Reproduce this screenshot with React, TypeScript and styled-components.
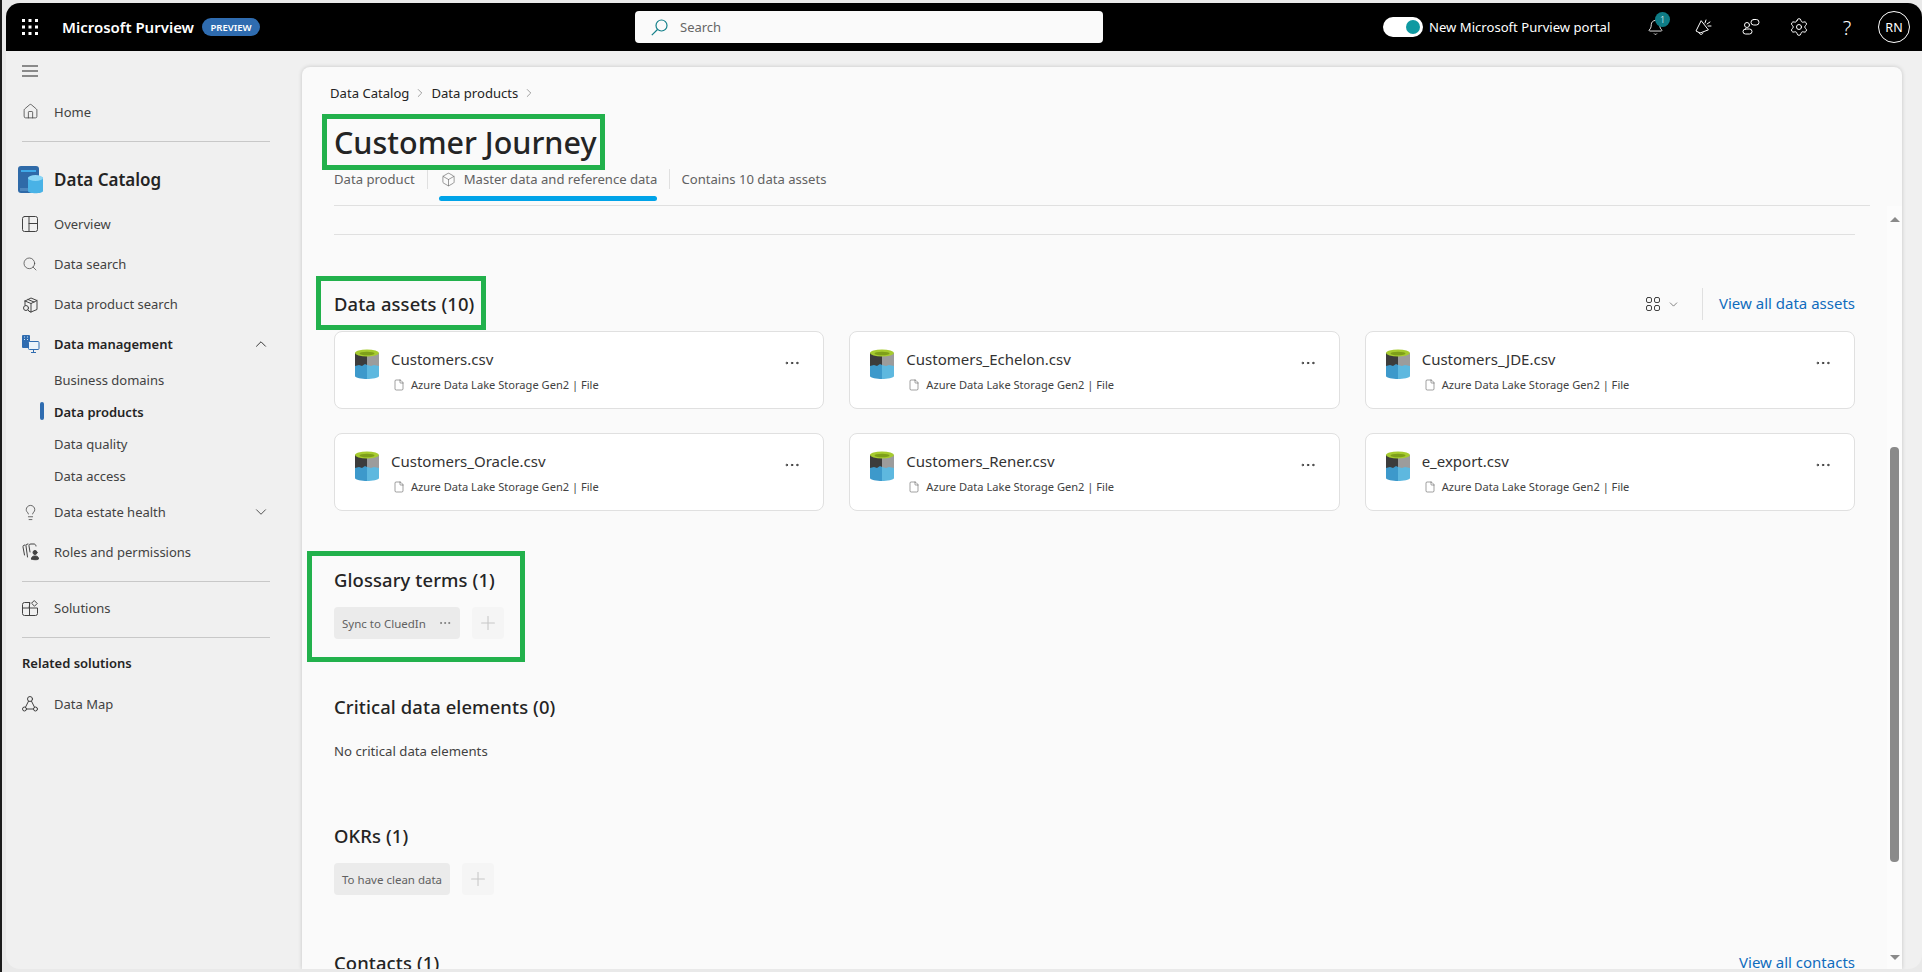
import React from "react"
import styled, { createGlobalStyle } from "styled-components"
import { Home, Search, Lightbulb, Bell, Settings, ChevronUp, ChevronDown, ChevronRight, MoreHorizontal, File, Plus, Box } from "lucide-react"

const GlobalStyle = createGlobalStyle`
html, body {
  margin: 0;
  padding: 0;
  background: #e9e9e9;
  overflow: hidden;
}
* { box-sizing: border-box; }
`

const Screen = styled.div`
width: 1922px;
height: 972px;
padding: 3px 0 3px 4px;
border-left: 2px solid #1c1c1c;
background: #e9e9e9;
font-family: "Noto Sans", "Open Sans", Arial, sans-serif;
color: #242424;
`

const AppWindow = styled.div`
height: 966px;
display: flex;
flex-direction: column;
background: #f0f0f0;
border-radius: 14px;
overflow: hidden;
`

const TopBar = styled.header`
height: 48px;
flex: none;
display: flex;
align-items: center;
background: #000;
color: #fff;
`

const BrandArea = styled.div`
width: 629px;
display: flex;
align-items: center;
padding-left: 16px;
`

const BrandName = styled.span`
margin-left: 24px;
font-size: 15px;
font-weight: 600;
`

const PreviewBadge = styled.span`
margin-left: 8px;
height: 18px;
width: 58px;
display: flex;
align-items: center;
justify-content: center;
border-radius: 9px;
background: #2f6cb0;
font-size: 9.5px;
font-weight: 600;
`

const SearchBox = styled.div`
width: 468px;
height: 32px;
display: flex;
align-items: center;
gap: 12px;
padding-left: 16px;
background: #fafafa;
border-radius: 4px;
font-size: 13px;
color: #666;
`

const TopRight = styled.div`
flex: 1;
display: flex;
align-items: center;
padding-left: 280px;
`

const Toggle = styled.span`
width: 40px;
height: 20px;
flex: none;
display: flex;
align-items: center;
justify-content: flex-end;
padding-right: 3px;
border-radius: 10px;
background: #fff;
`

const ToggleKnob = styled.span`
width: 14px;
height: 14px;
border-radius: 50%;
background: #0f99a1;
`

const PortalLabel = styled.span`
margin-left: 6px;
width: 202px;
font-size: 13.1px;
white-space: nowrap;
`

const TopIcon = styled.span`
position: relative;
width: 48px;
height: 48px;
flex: none;
display: flex;
align-items: center;
justify-content: center;
font-size: 20px;
font-weight: 300;
`

const CountBadge = styled.span`
position: absolute;
top: 9px;
left: 24px;
width: 15px;
height: 15px;
display: flex;
align-items: center;
justify-content: center;
border-radius: 50%;
background: #0e7c86;
font-size: 9px;
`

const Avatar = styled.span`
width: 32px;
height: 32px;
margin-left: 7px;
flex: none;
display: flex;
align-items: center;
justify-content: center;
border: 1px solid #fff;
border-radius: 50%;
font-size: 12.5px;
`

const Columns = styled.div`
flex: 1;
min-height: 0;
display: flex;
`

const Sidebar = styled.nav`
width: 296px;
flex: none;
padding-left: 16px;
`

const NavRow = styled.div<{ $h?: number; $strong?: boolean; $big?: boolean }>`
position: relative;
height: ${p => p.$h || 40}px;
width: 248px;
display: flex;
align-items: center;
padding-bottom: ${p => (p.$big ? 2 : 0)}px;
font-size: ${p => (p.$big ? 17 : 13)}px;
font-weight: ${p => (p.$big || p.$strong ? 600 : 400)};
color: ${p => (p.$big || p.$strong ? "#242424" : "#424242")};
`

const NavIcon = styled.span<{ $shift?: number }>`
width: ${p => 32 + (p.$shift || 0)}px;
flex: none;
display: flex;
align-items: center;
margin-left: ${p => -(p.$shift || 0)}px;
color: #424242;
`

const NavLabel = styled.span`
flex: 1;
`

const SubRow = styled(NavRow)`
height: 32px;
padding-left: 32px;
`

const ActiveMark = styled.span`
position: absolute;
left: 18px;
top: 6px;
width: 4px;
height: 18px;
border-radius: 2px;
background: #2f6cb0;
`

const NavDivider = styled.div<{ $top: number; $bottom: number }>`
width: 248px;
height: 1px;
margin: ${p => p.$top}px 0 ${p => p.$bottom}px;
background: #c8c8c8;
`

const RelatedTitle = styled.div`
height: 20px;
display: flex;
align-items: center;
margin: 15px 0 11px;
font-size: 13px;
font-weight: 600;
color: #242424;
`

const MainCard = styled.main`
width: 1600px;
margin-top: 16px;
display: flex;
flex-direction: column;
background: #fafafa;
border-radius: 8px 8px 0 0;
box-shadow: 0 0 4px rgba(0, 0, 0, 0.18);
overflow: hidden;
`

const PageHead = styled.div`
flex: none;
margin: 0 32px;
padding-top: 16px;
border-bottom: 1px solid #e0e0e0;
`

const Breadcrumb = styled.div`
height: 20px;
display: flex;
align-items: center;
gap: 4px;
margin-left: -4px;
font-size: 13.1px;
color: #242424;
svg { color: #616161; }
`

const TitleWrap = styled.div`
position: relative;
margin-top: 20px;
`

const PageTitle = styled.h1`
margin: 0;
height: 40px;
line-height: 38px;
font-size: 30.5px;
font-weight: 500;
color: #242424;
`

const Highlight = styled.span<{ $x: number; $y: number; $w: number; $h: number }>`
position: absolute;
left: ${p => p.$x}px;
top: ${p => p.$y}px;
width: ${p => p.$w}px;
height: ${p => p.$h}px;
border: 5px solid #22b14c;
pointer-events: none;
`

const Tabs = styled.div`
height: 36px;
margin-top: 6px;
display: flex;
align-items: flex-start;
font-size: 13.1px;
color: #616161;
`

const Tab = styled.div<{ $active?: boolean }>`
position: relative;
height: 20px;
display: flex;
align-items: center;
gap: 8px;
margin-right: 12px;
${p => p.$active && `
&::after {
  content: "";
  position: absolute;
  left: 0;
  right: 0;
  top: 27px;
  height: 5px;
  border-radius: 3px;
  background: #00a3e8;
}
`}
`

const TabIcon = styled.span`
display: flex;
margin-left: 2px;
color: #616161;
`

const TabSep = styled.span`
width: 1px;
height: 20px;
margin-right: 11px;
background: #e0e0e0;
`

const Body = styled.div`
flex: 1;
min-height: 0;
display: flex;
`

const Content = styled.div`
flex: 1;
min-width: 0;
padding: 0 32px;
overflow: hidden;
`

const ContentRule = styled.div`
height: 1px;
margin-top: 28px;
background: #e0e0e0;
`

const Section = styled.section<{ $top: number }>`
position: relative;
margin-top: ${p => p.$top}px;
`

const SectionHead = styled.div`
height: 32px;
display: flex;
align-items: center;
`

const SectionTitle = styled.h2`
flex: 1;
margin: 0;
line-height: 28px;
font-size: 18.4px;
font-weight: 500;
letter-spacing: 0.12px;
color: #242424;
`

const ViewSwitch = styled.span`
display: flex;
align-items: center;
gap: 7px;
padding-right: 22px;
margin-right: 16px;
height: 32px;
border-right: 1px solid #e0e0e0;
color: #424242;
`

const LinkText = styled.a`
margin-bottom: 2px;
font-size: 15px;
color: #0f6cbd;
`

const AssetGrid = styled.div`
display: grid;
grid-template-columns: repeat(3, 1fr);
gap: 24px 25px;
margin-top: 11px;
`

const AssetCard = styled.div`
height: 78px;
display: flex;
align-items: flex-start;
padding: 17px 22px 0 20px;
background: #fff;
border: 1px solid #e0e0e0;
border-radius: 8px;
`

const AssetText = styled.div`
flex: 1;
margin: -1px 0 0 12px;
`

const AssetName = styled.div`
height: 22px;
line-height: 22px;
font-size: 15px;
color: #333;
`

const AssetMeta = styled.div`
display: flex;
align-items: center;
gap: 6px;
margin-top: 7px;
margin-left: 2px;
font-size: 11.1px;
color: #424242;
`

const MoreButton = styled.span`
display: flex;
margin-top: 5px;
`

const TagRow = styled.div`
display: flex;
gap: 12px;
margin-top: 13px;
`

const Chip = styled.span`
height: 32px;
display: flex;
align-items: center;
gap: 12px;
padding: 0 8px;
background: #ebebeb;
border-radius: 4px;
font-size: 11.5px;
color: #616161;
`

const AddButton = styled.span`
width: 32px;
height: 32px;
display: flex;
align-items: center;
justify-content: center;
background: #f5f5f5;
border-radius: 4px;
color: #c8c8c8;
`

const EmptyText = styled.div`
height: 20px;
line-height: 20px;
margin-top: 20px;
font-size: 13.2px;
color: #424242;
`

const Scrollbar = styled.div`
width: 15px;
flex: none;
display: flex;
flex-direction: column;
align-items: center;
padding: 11px 0 9px;
background: #fcfcfc;
`

const ArrowUp = styled.span`
width: 0;
height: 0;
border-left: 5px solid transparent;
border-right: 5px solid transparent;
border-bottom: 5px solid #8a8a8a;
`

const ArrowDown = styled.span`
width: 0;
height: 0;
margin-top: auto;
border-left: 5px solid transparent;
border-right: 5px solid transparent;
border-top: 5px solid #8a8a8a;
`

const Thumb = styled.span`
width: 9px;
height: 415px;
margin-top: 225px;
border-radius: 4px;
background: #8a8a8a;
`

const line = { fill: "none", stroke: "currentColor", strokeWidth: 1, strokeLinecap: "round" as const, strokeLinejoin: "round" as const }

const AppsIcon = () => (
  <svg width="16" height="16" viewBox="0 0 16 16" fill="#fff">
    {[0, 1, 2].flatMap(r => [0, 1, 2].map(c => <rect key={`${r}${c}`} x={c * 6.5} y={r * 6.5} width="3" height="3" />))}
  </svg>
)

const MenuIcon = () => (
  <svg width="16" height="12" viewBox="0 0 16 12"><path d="M0 1h16M0 6h16M0 11h16" stroke="#242424" /></svg>
)

const OverviewIcon = () => (
  <svg width="16" height="16" viewBox="0 0 16 16" {...line}>
    <rect x="0.5" y="0.5" width="15" height="15" rx="2" />
    <path d="M7 0.5v15M7 7.5h8.5" />
  </svg>
)

const ProductSearchIcon = () => (
  <svg width="18" height="18" viewBox="0 0 18 18" {...line}>
    <path d="M3 6 9 3l6 2.5v9L9 17l-2-.8" />
    <path d="M3 6l6 2.5L15 5.500M9 8.500V17M3 6v4M6 4.500l6 2.500" />
    <circle cx="4" cy="13" r="2.500" />
    <path d="M6 15l2 2" />
  </svg>
)

const CatalogIcon = () => (
  <svg width="25" height="28" viewBox="0 0 25 28">
    <rect x="0" y="0" width="21" height="27" rx="3" fill="#2f6aa8" />
    <rect x="3" y="4" width="15" height="2" fill="#3fa9e8" />
    <rect x="2" y="22" width="17" height="3" fill="#4d86bd" />
    <path d="M10 12c0-2 15-2 15 0v13c0 3-15 3-15 0z" fill="#49b2e6" />
    <ellipse cx="17.500" cy="12" rx="7.500" ry="3" fill="#8ad5f5" />
  </svg>
)

const ManagementIcon = () => (
  <svg width="18" height="18" viewBox="0 0 18 18">
    <rect x="0" y="0" width="8" height="13" rx="1" fill="#2f6cb0" />
    <path d="M2 2h1M5 2h1M2 4.500h1M5 4.500h1" stroke="#cfe2f5" />
    <rect x="6.500" y="6.500" width="10.500" height="8" rx="1" fill="#eaf3fb" stroke="#2f6cb0" />
    <path d="M11.500 15v2M9 17.500h5" stroke="#2f6cb0" />
  </svg>
)

const RolesIcon = () => (
  <svg width="18" height="18" viewBox="0 0 18 18" {...line}>
    <path d="M3 2C1 2 1 3 1 4l1.500 8M6 1C4 1 4 2 4 3l1.500 11M14 3c0-1-1-2-2-2H9C7 1 7 2 7 3l1 6" />
    <circle cx="13" cy="9.500" r="2" fill="currentColor" />
    <path d="M9.500 16c0-2 1-3 3.500-3s3.500 1 3.500 3c0 1-7 1-7 0z" fill="currentColor" />
  </svg>
)

const SolutionsIcon = () => (
  <svg width="16" height="16" viewBox="0 0 16 16" {...line}>
    <path d="M7.500 2.500h-5a2 2 0 0 0-2 2v9a2 2 0 0 0 2 2h11a2 2 0 0 0 2-2v-5.500h-8z" />
    <path d="M7.500 2.500v13M0.500 8h7" />
    <path d="M12.500 0.800l2.700 2.700-2.700 2.700-2.700-2.700z" />
  </svg>
)

const MapIcon = () => (
  <svg width="16" height="16" viewBox="0 0 16 16" {...line}>
    <circle cx="8" cy="3" r="2.500" />
    <circle cx="2.500" cy="13" r="2" />
    <circle cx="13.500" cy="13" r="2" />
    <path d="M6.500 5.200 3.500 11.200M9.500 5.200l3 6M4.500 13h7" />
  </svg>
)

const SearchGlass = () => (
  <svg width="17" height="17" viewBox="0 0 17 17" fill="none" stroke="#14808a" strokeWidth="1.2">
    <circle cx="10.500" cy="6.500" r="5.500" />
    <path d="M6.500 10.500 0.800 16.200" />
  </svg>
)

const MegaphoneIcon = () => (
  <svg width="18" height="18" viewBox="0 0 18 18" {...line}>
    <path d="M7 3 2 13l4 2 8-3z" />
    <path d="M5 14.500c0 2 3 3 4 .5" />
    <path d="M12 2l-1 3M16 4l-3 2M17 8h-3" />
  </svg>
)

const ChatIcon = () => (
  <svg width="18" height="18" viewBox="0 0 18 18" {...line}>
    <rect x="9" y="1.500" width="8" height="5.500" rx="2.700" />
    <circle cx="5" cy="7" r="2.500" />
    <rect x="1" y="11" width="9" height="5" rx="2.500" />
  </svg>
)

const TilesIcon = () => (
  <svg width="14" height="14" viewBox="0 0 14 14" {...line}>
    <rect x="0.500" y="0.500" width="5" height="5" rx="1.500" />
    <rect x="8.500" y="0.500" width="5" height="5" rx="1.500" />
    <rect x="0.500" y="8.500" width="5" height="5" rx="1.500" />
    <rect x="8.500" y="8.500" width="5" height="5" rx="1.500" />
  </svg>
)

const LakeIcon = () => (
  <svg width="24" height="30" viewBox="0 0 24 30">
    <path d="M0 4h12v13H0z" fill="#3c3c3c" />
    <path d="M12 4h12v13H12z" fill="#9c9c9c" />
    <path d="M0 17l4-1 3 1 3-2 2 1v14c-5 0-12-1-12-3z" fill="#3d99cb" />
    <path d="M12 16l4 1 3-1 5 1v10c0 2-7 3-12 3z" fill="#5eb8df" />
    <ellipse cx="12" cy="4" rx="12" ry="3.500" fill="#a6cb2f" />
    <ellipse cx="12" cy="4.500" rx="7.500" ry="1.800" fill="#7e9f1a" />
  </svg>
)

const assets = ["Customers.csv", "Customers_Echelon.csv", "Customers_JDE.csv", "Customers_Oracle.csv", "Customers_Rener.csv", "e_export.csv"]

const App = (): JSX.Element => (
  <Screen>
    <GlobalStyle />
    <AppWindow>
      <TopBar>
        <BrandArea>
          <AppsIcon />
          <BrandName>Microsoft Purview</BrandName>
          <PreviewBadge>PREVIEW</PreviewBadge>
        </BrandArea>
        <SearchBox><SearchGlass />Search</SearchBox>
        <TopRight>
          <Toggle><ToggleKnob /></Toggle>
          <PortalLabel>New Microsoft Purview portal</PortalLabel>
          <TopIcon><Bell size={17} strokeWidth={1.25} /><CountBadge>1</CountBadge></TopIcon>
          <TopIcon><MegaphoneIcon /></TopIcon>
          <TopIcon><ChatIcon /></TopIcon>
          <TopIcon><Settings size={20} strokeWidth={1.2} /></TopIcon>
          <TopIcon>?</TopIcon>
          <Avatar>RN</Avatar>
        </TopRight>
      </TopBar>

      <Columns>
        <Sidebar>
          <NavRow><MenuIcon /></NavRow>
          <NavRow $h={41}><NavIcon><Home size={17} strokeWidth={1.1} /></NavIcon><NavLabel>Home</NavLabel></NavRow>
          <NavDivider $top={9} $bottom={15} />
          <NavRow $h={47} $big><NavIcon $shift={4}><CatalogIcon /></NavIcon><NavLabel>Data Catalog</NavLabel></NavRow>
          <NavRow><NavIcon><OverviewIcon /></NavIcon><NavLabel>Overview</NavLabel></NavRow>
          <NavRow><NavIcon><Search size={16} strokeWidth={1.1} /></NavIcon><NavLabel>Data search</NavLabel></NavRow>
          <NavRow><NavIcon><ProductSearchIcon /></NavIcon><NavLabel>Data product search</NavLabel></NavRow>
          <NavRow $strong><NavIcon><ManagementIcon /></NavIcon><NavLabel>Data management</NavLabel><ChevronUp size={18} strokeWidth={1.2} /></NavRow>
          <SubRow>Business domains</SubRow>
          <SubRow $strong><ActiveMark />Data products</SubRow>
          <SubRow>Data quality</SubRow>
          <SubRow>Data access</SubRow>
          <NavRow><NavIcon><Lightbulb size={17} strokeWidth={1.1} /></NavIcon><NavLabel>Data estate health</NavLabel><ChevronDown size={18} strokeWidth={1.2} /></NavRow>
          <NavRow><NavIcon><RolesIcon /></NavIcon><NavLabel>Roles and permissions</NavLabel></NavRow>
          <NavDivider $top={9} $bottom={6} />
          <NavRow><NavIcon><SolutionsIcon /></NavIcon><NavLabel>Solutions</NavLabel></NavRow>
          <NavDivider $top={9} $bottom={0} />
          <RelatedTitle>Related solutions</RelatedTitle>
          <NavRow><NavIcon><MapIcon /></NavIcon><NavLabel>Data Map</NavLabel></NavRow>
        </Sidebar>

        <MainCard>
          <PageHead>
            <Breadcrumb>
              Data Catalog <ChevronRight size={14} strokeWidth={1} /> Data products <ChevronRight size={14} strokeWidth={1} />
            </Breadcrumb>
            <TitleWrap>
              <PageTitle>Customer Journey</PageTitle>
              <Highlight $x={-12} $y={-9} $w={283} $h={56} />
            </TitleWrap>
            <Tabs>
              <Tab>Data product</Tab>
              <TabSep />
              <Tab $active><TabIcon><Box size={15} strokeWidth={1} /></TabIcon>Master data and reference data</Tab>
              <TabSep />
              <Tab>Contains 10 data assets</Tab>
            </Tabs>
          </PageHead>

          <Body>
            <Content>
              <ContentRule />
              <Section $top={53}>
                <SectionHead>
                  <SectionTitle>Data assets (10)</SectionTitle>
                  <ViewSwitch><TilesIcon /><ChevronDown size={13} strokeWidth={1.2} /></ViewSwitch>
                  <LinkText>View all data assets</LinkText>
                </SectionHead>
                <Highlight $x={-18} $y={-12} $w={170} $h={54} />
                <AssetGrid>
                  {assets.map(name => (
                    <AssetCard key={name}>
                      <LakeIcon />
                      <AssetText>
                        <AssetName>{name}</AssetName>
                        <AssetMeta><File size={12} strokeWidth={1} />Azure Data Lake Storage Gen2 | File</AssetMeta>
                      </AssetText>
                      <MoreButton><MoreHorizontal size={18} strokeWidth={1.2} /></MoreButton>
                    </AssetCard>
                  ))}
                </AssetGrid>
              </Section>

              <Section $top={55}>
                <SectionTitle>Glossary terms (1)</SectionTitle>
                <TagRow>
                  <Chip>Sync to CluedIn <MoreHorizontal size={14} strokeWidth={1.2} /></Chip>
                  <AddButton><Plus size={22} strokeWidth={1.2} /></AddButton>
                </TagRow>
                <Highlight $x={-27} $y={-15} $w={218} $h={111} />
              </Section>

              <Section $top={54}>
                <SectionTitle>Critical data elements (0)</SectionTitle>
                <EmptyText>No critical data elements</EmptyText>
              </Section>

              <Section $top={61}>
                <SectionTitle>OKRs (1)</SectionTitle>
                <TagRow>
                  <Chip>To have clean data</Chip>
                  <AddButton><Plus size={22} strokeWidth={1.2} /></AddButton>
                </TagRow>
              </Section>

              <Section $top={52}>
                <SectionHead>
                  <SectionTitle>Contacts (1)</SectionTitle>
                  <LinkText>View all contacts</LinkText>
                </SectionHead>
              </Section>
            </Content>
            <Scrollbar>
              <ArrowUp />
              <Thumb />
              <ArrowDown />
            </Scrollbar>
          </Body>
        </MainCard>
      </Columns>
    </AppWindow>
  </Screen>
)

export default App
